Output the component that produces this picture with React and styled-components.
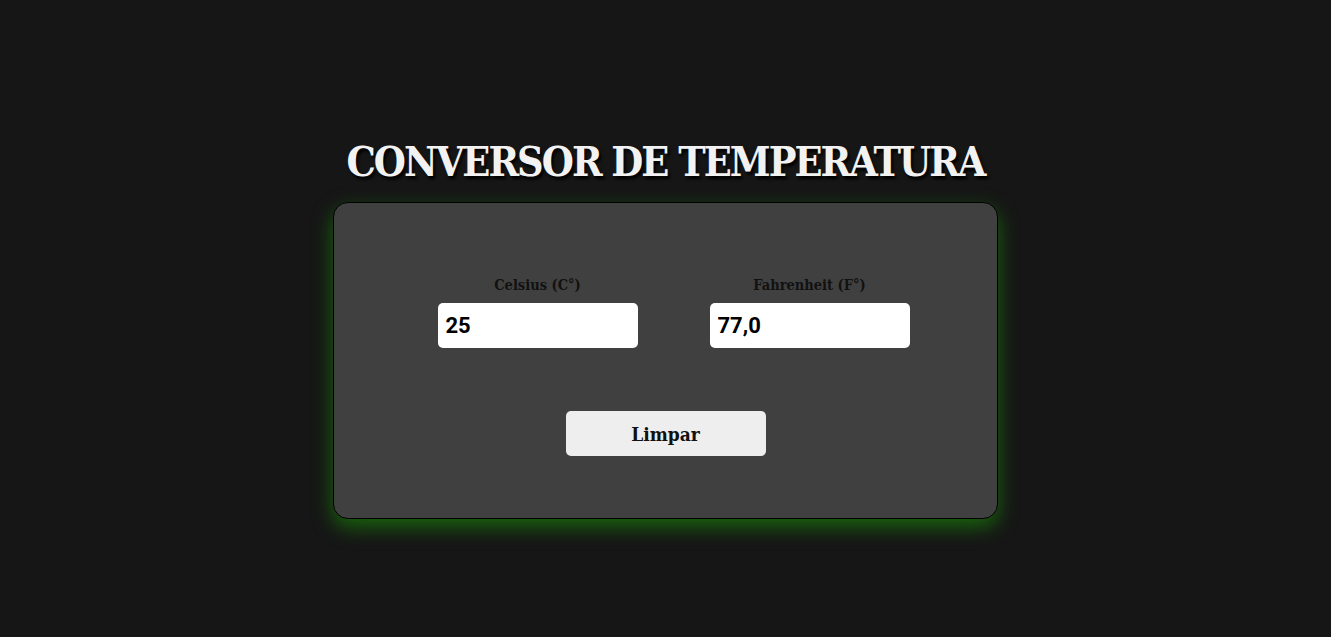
import React, { useState } from "react";
import styled, { createGlobalStyle } from "styled-components";

const GlobalStyle = createGlobalStyle`
  html, body {
    margin: 0;
    padding: 0;
    background: #161616;
  }
  body {
    font-family: "DejaVu Serif", serif;
    font-stretch: condensed;
  }
`;

const Page = styled.main`
  min-height: 637px;
  display: flex;
  flex-direction: column;
  align-items: center;
  padding-top: 137px;
  box-sizing: border-box;
`;

const Title = styled.h1`
  margin: 0 0 15px;
  font-size: 41px;
  line-height: 50px;
  font-weight: bold;
  font-stretch: condensed;
  letter-spacing: -2px;
  color: #f2f2f2;
  text-shadow: 2px 3px 3px #000;
`;

const Card = styled.section`
  width: 665px;
  height: 317px;
  box-sizing: border-box;
  background: #404040;
  border: 1px solid #000;
  border-radius: 15px;
  box-shadow: 0 8px 20px rgba(25, 125, 10, 0.75);
  padding: 72px 0 0 16px;
  display: flex;
  flex-direction: column;
  align-items: center;
`;

const Row = styled.div`
  display: flex;
  gap: 72px;
`;

const Field = styled.label`
  display: flex;
  flex-direction: column;
  align-items: center;
  gap: 8px;
`;

const Caption = styled.span`
  font-size: 14.5px;
  line-height: 20px;
  font-weight: bold;
  font-stretch: condensed;
  color: #111;
`;

const Input = styled.input`
  width: 200px;
  height: 45px;
  box-sizing: border-box;
  border: none;
  border-radius: 5px;
  background: #fff;
  padding: 0 8px;
  font-family: Roboto, "Liberation Sans", sans-serif;
  font-size: 22px;
  font-weight: bold;
  color: #000;
  outline: none;
`;

const Button = styled.button`
  margin: 63px 0 0 -16px;
  width: 200px;
  height: 45px;
  border: none;
  border-radius: 5px;
  background: #eeeeee;
  font-family: "DejaVu Serif", serif;
  font-stretch: condensed;
  font-size: 19px;
  font-weight: bold;
  color: #111;
  cursor: pointer;
`;

export default function App() {
  const [celsius, setCelsius] = useState("25");
  const [fahrenheit, setFahrenheit] = useState("77,0");

  const fromC = (v) => {
    setCelsius(v);
    const n = parseFloat(v.replace(",", "."));
    setFahrenheit(isNaN(n) ? "" : ((n * 9) / 5 + 32).toFixed(1).replace(".", ","));
  };

  const fromF = (v) => {
    setFahrenheit(v);
    const n = parseFloat(v.replace(",", "."));
    setCelsius(isNaN(n) ? "" : (((n - 32) * 5) / 9).toFixed(1).replace(".", ","));
  };

  return (
    <>
      <GlobalStyle />
      <Page>
        <Title>CONVERSOR DE TEMPERATURA</Title>
        <Card>
          <Row>
            <Field>
              <Caption>Celsius (C°)</Caption>
              <Input value={celsius} onChange={(e) => fromC(e.target.value)} />
            </Field>
            <Field>
              <Caption>Fahrenheit (F°)</Caption>
              <Input value={fahrenheit} onChange={(e) => fromF(e.target.value)} />
            </Field>
          </Row>
          <Button
            onClick={() => {
              setCelsius("");
              setFahrenheit("");
            }}
          >
            Limpar
          </Button>
        </Card>
      </Page>
    </>
  );
}
